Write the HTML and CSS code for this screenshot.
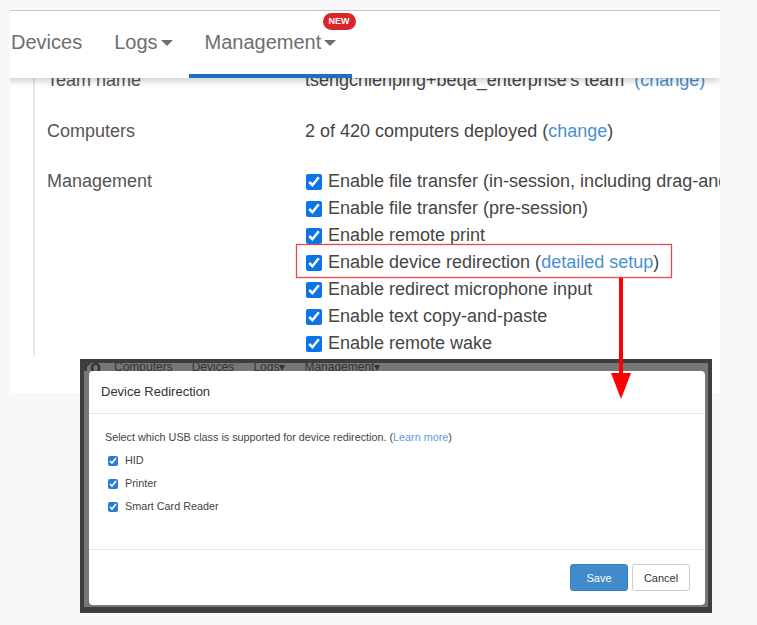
FILE: index.html
```html
<!DOCTYPE html>
<html lang="en">
<head>
    <meta charset="UTF-8">
    <meta name="viewport" content="width=device-width, initial-scale=1.0">
    <title>Team Settings - Device Redirection</title>
    <link rel="stylesheet" href="styles.css">
</head>
<body>
    <div id="page">
        <div class="card">
            <nav class="topnav">
                <a class="nav-item">Devices</a>
                <a class="nav-item">Logs<span class="caret"></span></a>
                <a class="nav-item active">Management<span class="caret"></span><span class="badge">NEW</span></a>
            </nav>

            <div class="settings">
                <div class="row">
                    <div class="label">Team name</div>
                    <div class="value">tsengchienping+beqa_enterprise's team&nbsp; <a class="link">(change)</a></div>
                </div>
                <div class="row">
                    <div class="label">Computers</div>
                    <div class="value">2 of 420 computers deployed (<a class="link">change</a>)</div>
                </div>
                <div class="row">
                    <div class="label">Management</div>
                    <ul class="value options">
                        <li><input type="checkbox" checked> Enable file transfer (in-session, including drag-and-drop)</li>
                        <li><input type="checkbox" checked> Enable file transfer (pre-session)</li>
                        <li><input type="checkbox" checked> Enable remote print</li>
                        <li><input type="checkbox" checked> Enable device redirection (<a class="link">detailed setup</a>)</li>
                        <li><input type="checkbox" checked> Enable redirect microphone input</li>
                        <li><input type="checkbox" checked> Enable text copy-and-paste</li>
                        <li><input type="checkbox" checked> Enable remote wake</li>
                    </ul>
                </div>
            </div>
        </div>

        <!-- screenshot of the dialog that opens from "detailed setup" -->
        <div class="shot">
            <div class="shot-nav">
                <span class="shot-logo">ro</span>
                <span>Computers</span>
                <span>Devices</span>
                <span>Logs&#9662;</span>
                <span>Management&#9662;</span>
            </div>
            <div class="modal">
                <div class="modal-header">Device Redirection</div>
                <div class="modal-body">
                    <p>Select which USB class is supported for device redirection. (<a class="link">Learn more</a>)</p>
                    <label class="usb"><input type="checkbox" checked> HID</label>
                    <label class="usb"><input type="checkbox" checked> Printer</label>
                    <label class="usb"><input type="checkbox" checked> Smart Card Reader</label>
                </div>
                <div class="modal-footer">
                    <button class="btn btn-primary">Save</button>
                    <button class="btn">Cancel</button>
                </div>
            </div>
        </div>

        <!-- annotation: highlight + arrow -->
        <svg class="annotation" width="757" height="625" viewBox="0 0 757 625">
            <rect x="296.5" y="244.5" width="375" height="33" fill="none" stroke="#e5484d" stroke-width="1.3"/>
            <line x1="621" y1="278" x2="621" y2="376" stroke="#ff0000" stroke-width="4"/>
            <polygon points="611,373 631,373 621,399" fill="#ff0000"/>
        </svg>
    </div>
</body>
</html>
```

FILE: styles.css
```css
body {
    margin: 0;
    background-color: #f8f8f8;
    font-family: "Liberation Sans", Arial, sans-serif;
}

#page {
    position: relative;
    width: 757px;
    height: 625px;
    overflow: hidden;
}

.card {
    margin: 10px 0 0 10px;
    width: 710px;
    height: 382px;
    background-color: #fff;
    border-top: 1px solid #c6c6c6;
    overflow: hidden;
}

.topnav {
    position: relative;
    z-index: 2;
    display: flex;
    height: 67px;
    margin-left: -15px;
    background-color: #fff;
    box-shadow: 0 3px 7px rgba(0, 0, 0, 0.2);
}

.nav-item {
    position: relative;
    display: flex;
    align-items: center;
    padding: 0 16px 5px;
    font-size: 20px;
    color: #6e6e6e;
}

.nav-item.active {
    box-shadow: inset 0 -4px 0 #1f6fc0;
}

.caret {
    width: 0;
    height: 0;
    margin: 2px 0 0 3px;
    border-top: 6px solid #6e6e6e;
    border-left: 6px solid transparent;
    border-right: 6px solid transparent;
}

.badge {
    position: absolute;
    top: 2px;
    left: 134px;
    width: 33px;
    height: 17px;
    line-height: 17px;
    border-radius: 9px;
    background-color: #d8262d;
    color: #fff;
    font-size: 9px;
    font-weight: bold;
    text-align: center;
}

.settings {
    margin: -11px 0 0 23px;
    padding-left: 12px;
    border-left: 2px solid #e8e8e8;
    font-size: 18px;
    line-height: 27px;
    color: #454545;
}

.row {
    display: grid;
    grid-template-columns: 258px 1fr;
    margin-bottom: 23px;
    white-space: nowrap;
}

.row:first-child {
    margin-bottom: 24px;
}

.label {
    color: #555;
}

.link {
    color: #4a8fd0;
}

.options {
    list-style: none;
    margin: 0;
    padding: 0;
}

.options li {
    display: flex;
    align-items: center;
    white-space: pre;
}

.options input {
    width: 16px;
    height: 16px;
    margin: 0 1px 0 1px;
    accent-color: #0b74e6;
}

.shot {
    position: absolute;
    left: 80px;
    top: 359px;
    width: 632px;
    height: 254px;
    box-sizing: border-box;
    border: 4px solid #3e3e3e;
    border-bottom-width: 6px;
    background-color: #777;
    display: flex;
    flex-direction: column;
}

.shot-nav {
    display: flex;
    gap: 19px;
    height: 8px;
    overflow: hidden;
    font-size: 12px;
    line-height: 12px;
    color: #333;
}

.shot-nav span {
    margin-top: -2px;
}

.shot-nav .shot-logo {
    width: 12px;
    margin: -5px 0 0 -1px;
    font-size: 18px;
    font-weight: bold;
    line-height: 18px;
}

.modal {
    margin: 0 3px 0 5px;
    height: 234px;
    background-color: #fff;
    border-radius: 4px;
    color: #333;
}

.modal-header {
    height: 42px;
    line-height: 42px;
    padding: 0 12px;
    font-size: 13px;
    border-bottom: 1px solid #e5e5e5;
}

.modal-body {
    height: 135px;
    box-sizing: border-box;
    padding: 12px 16px 0;
    font-size: 10.8px;
    line-height: 23px;
    color: #444;
}

.modal-body p {
    margin: 0;
}

.modal-body .link {
    color: #5b9bd5;
}

.usb {
    display: flex;
    align-items: center;
    padding-left: 3px;
    height: 23px;
    white-space: pre;
}

.usb input {
    width: 10px;
    height: 10px;
    margin: 0 4px 0 0;
    accent-color: #2a7bd6;
}

.modal-footer {
    display: flex;
    justify-content: flex-end;
    gap: 4px;
    padding: 14px 15px 0 0;
    border-top: 1px solid #e5e5e5;
}

.btn {
    width: 58px;
    height: 27px;
    padding: 0;
    font-family: inherit;
    font-size: 11px;
    color: #333;
    background-color: #fff;
    border: 1px solid #ccc;
    border-radius: 3px;
}

.btn-primary {
    color: #fff;
    background-color: #428bca;
    border-color: #3a80be;
}

.annotation {
    position: absolute;
    top: 0;
    left: 0;
    z-index: 5;
    pointer-events: none;
}
```
